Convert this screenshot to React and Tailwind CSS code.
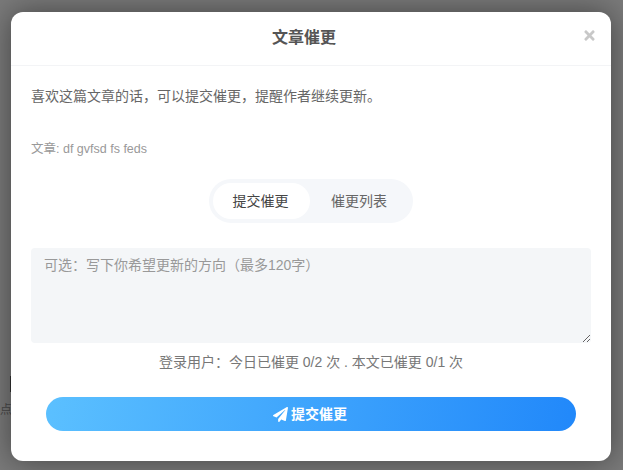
import React from "react";
import { FaPaperPlane, FaTimes } from "react-icons/fa";

const font = "font-['Liberation_Sans','Noto_Sans_CJK_SC',sans-serif]";

export default function App() {
  return (
    <div className={`relative h-[470px] w-[623px] overflow-hidden bg-[#7a7a7a] ${font}`}>
      <div className="absolute left-[10px] top-[376px] h-[16px] w-[4px] bg-[#333333]" />
      <div className="absolute left-0 top-[402px] text-xs text-[#4a4a4a]">点</div>
      <div className="relative ml-[11px] mt-[12px] flex h-[449px] w-[600px] flex-col rounded-xl bg-white shadow-[0_0_30px_rgba(0,0,0,0.45)]">
        <div className="relative flex h-[54px] shrink-0 items-center justify-center border-b border-[#f3f4f6] pb-[2px] pr-[14px]">
          <h2 className="text-base font-bold text-[#555555]">文章催更</h2>
          <FaTimes className="absolute right-[15px] top-[16px] h-[15px] w-[13px] text-[#c8c8c8]" />
        </div>
        <div className="flex flex-1 flex-col px-5">
          <p className="mt-[21px] text-sm leading-[18px] text-[#666666]">喜欢这篇文章的话，可以提交催更，提醒作者继续更新。</p>
          <p className="mt-[36px] text-[12.5px] leading-[16px] text-[#999999]">文章: df gvfsd fs feds</p>
          <div className="mt-[22px] flex justify-center">
            <div className="flex h-[44px] items-center rounded-full bg-[#f5f7fa] p-[4px] pr-[3px]">
              <div className="flex h-[36px] w-[97px] items-center justify-center rounded-full bg-white pb-[1px] pr-[2px] text-sm text-[#444444]">提交催更</div>
              <div className="flex h-[36px] w-[100px] items-center justify-center pb-[1px] pr-[2px] text-sm text-[#666666]">催更列表</div>
            </div>
          </div>
          <textarea
            className="mt-[25px] h-[95px] w-full rounded bg-[#f4f6f8] px-[13px] py-[8px] text-sm leading-[18px] text-[#555555] outline-none placeholder:text-[#999999]"
            placeholder="可选：写下你希望更新的方向（最多120字）"
          />
          <p className="mt-[9px] text-center text-sm leading-[20px] text-[#777777]">登录用户：今日已催更 0/2 次 . 本文已催更 0/1 次</p>
          <div className="mt-[25px] flex justify-center">
            <button className="flex h-[34px] w-[530px] items-center justify-center gap-[3px] rounded-full bg-[linear-gradient(100deg,#5bc0ff,#2188fa)] pr-[2px] text-sm font-bold text-white">
              <FaPaperPlane className="h-[15px] w-[15px]" />
              提交催更
            </button>
          </div>
        </div>
      </div>
    </div>
  );
}
